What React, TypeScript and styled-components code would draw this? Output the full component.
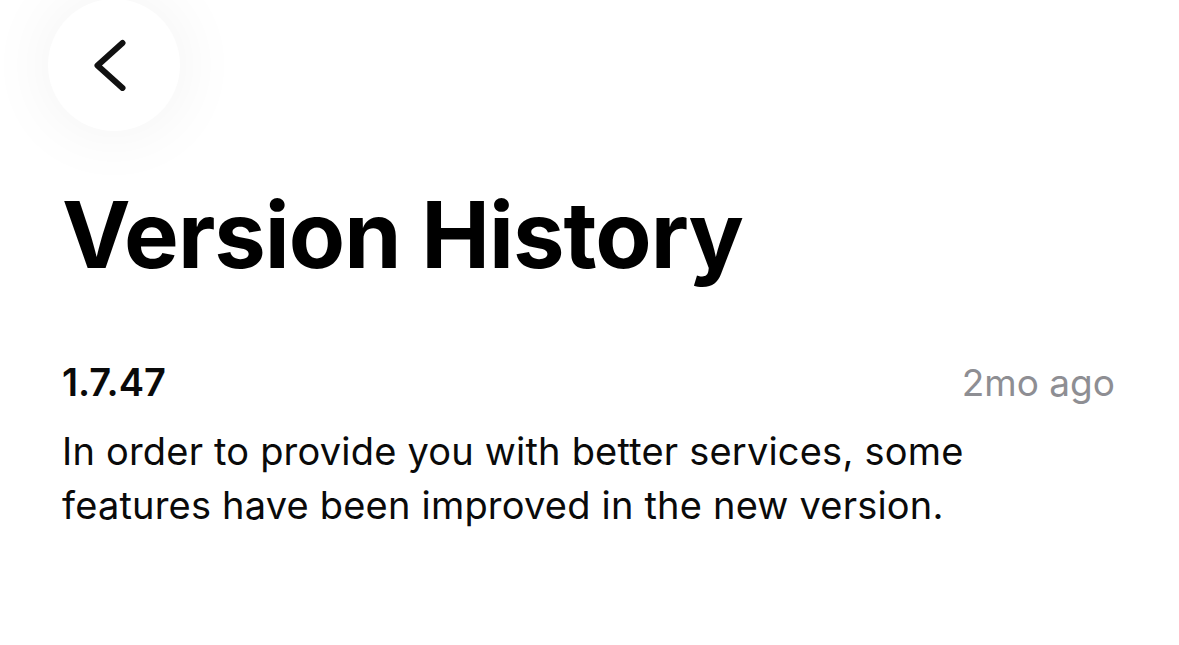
import React from "react";
import styled, { createGlobalStyle } from "styled-components";

const Global = createGlobalStyle`
  html, body { margin: 0; padding: 0; background: #ffffff; }
  body { font-family: Inter, "Noto Sans", sans-serif; -webkit-font-smoothing: antialiased; }
  * { box-sizing: border-box; }
`;

const Page = styled.div`
  width: 1179px;
  height: 645px;
  overflow: hidden;
  background: #ffffff;
  display: flex;
  flex-direction: column;
  padding: 0 64px 0 62px;
`;

const BackButton = styled.button`
  width: 132px;
  height: 132px;
  margin: -1px 0 0 -14px;
  border: none;
  border-radius: 50%;
  background: #ffffff;
  box-shadow: 0 0 70px rgba(0, 0, 0, 0.06);
  display: flex;
  align-items: center;
  justify-content: center;
  padding: 0 8px 0 0;
  cursor: pointer;
  flex-shrink: 0;
`;

const Title = styled.h1`
  margin: 58px 0 0 0;
  font-family: Inter, "Noto Sans", sans-serif;
  font-weight: 700;
  font-size: 92px;
  line-height: 92px;
  letter-spacing: -1px;
  color: #000000;
`;

const VersionRow = styled.div`
  margin-top: 78px;
  display: flex;
  justify-content: space-between;
  align-items: baseline;
  height: 46px;
`;

const VersionNumber = styled.span`
  font-weight: 600;
  font-size: 38px;
  line-height: 46px;
  color: #0a0a0a;
`;

const Ago = styled.span`
  font-weight: 400;
  font-size: 37px;
  line-height: 46px;
  color: #8e8e93;
`;

const Notes = styled.p`
  margin: 19px 0 0 0;
  font-weight: 400;
  font-size: 38px;
  line-height: 54px;
  letter-spacing: 0.2px;
  color: #0a0a0a;
  max-width: 960px;
`;

export default function App() {
  return (
    <>
      <Global />
      <Page>
        <BackButton aria-label="Back">
          <svg width="32" height="52" viewBox="0 0 32 52" fill="none">
            <path d="M28.5 4 L3.5 26.5 L28.5 49" stroke="#111111" strokeWidth="6" strokeLinecap="round" strokeLinejoin="round" />
          </svg>
        </BackButton>
        <Title>Version History</Title>
        <VersionRow>
          <VersionNumber>1.7.47</VersionNumber>
          <Ago>2mo ago</Ago>
        </VersionRow>
        <Notes>
          In order to provide you with better services, some features have been improved in the new version.
        </Notes>
      </Page>
    </>
  );
}
